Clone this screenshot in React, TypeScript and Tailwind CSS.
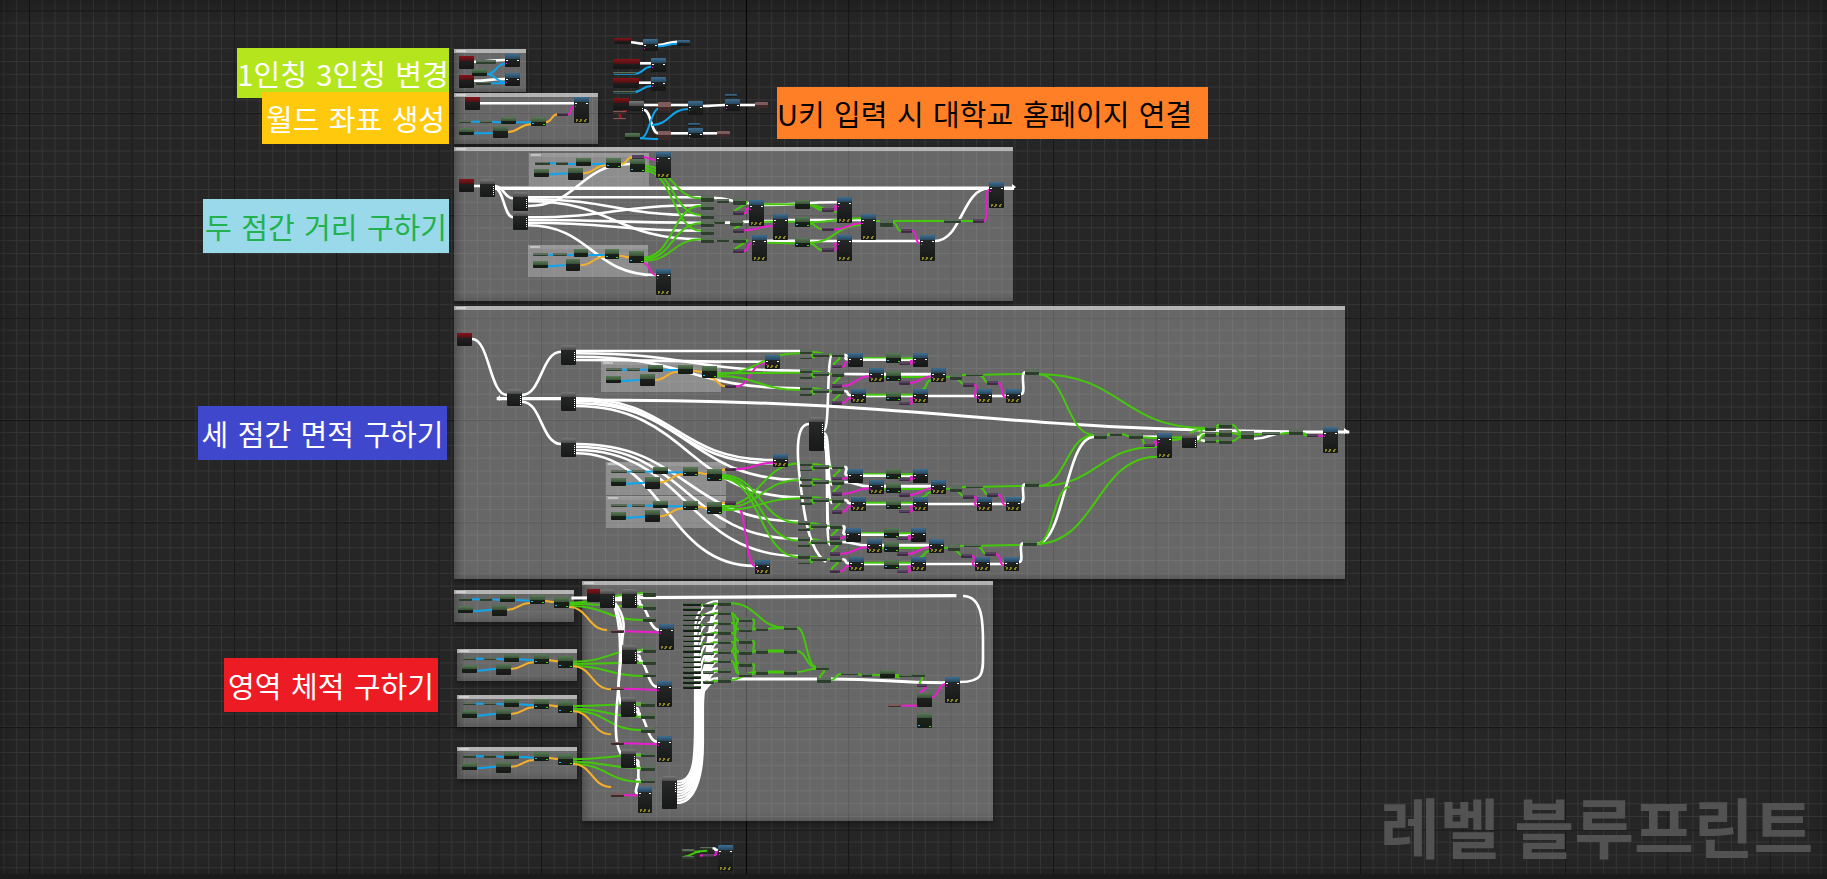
import React from 'react';

type Kind = 'red' | 'blue' | 'tall' | 'gray' | 'green' | 'small' | 'pink' | 'rose' | 'ink';
type NodeBox = [number, number, number, number, Kind];
type Wire = [number, number, number, number, string, number?];

const WHITE = '#ffffff';
const GREEN = '#45c80c';
const BLUE = '#10a4ec';
const ORANGE = '#f2b02c';
const MAGENTA = '#e91fce';
const RED = '#a81818';

interface Group {
  ox: number;
  oy: number;
  sx: number;
  sy: number;
  nodes: NodeBox[];
  wires: Wire[];
}

// comment boxes in the graph: x, y, right, bottom
const outerFrames = [
  [454, 49, 526, 92],
  [454, 93, 598, 144],
  [454, 147, 1013, 301],
  [454, 306, 1345, 579],
  [582, 581, 993, 821],
  [454, 590, 574, 622],
  [457, 649, 577, 681],
  [457, 695, 577, 727],
  [457, 747, 577, 779],
];
const innerFrames = [
  [529, 153, 649, 186],
  [528, 245, 648, 277],
  [601, 361, 721, 392],
  [606, 462, 726, 495],
  [606, 496, 726, 528],
];

const labels = [
  { text: '1인칭 3인칭 변경', x: 237, y: 48, w: 212, h: 50, bg: 'bg-[#b5e61d]', fg: 'text-white', align: 'justify-center' },
  { text: '월드 좌표 생성', x: 262, y: 92, w: 187, h: 52, bg: 'bg-[#ffc90e]', fg: 'text-white', align: 'justify-center' },
  { text: '두 점간 거리 구하기', x: 203, y: 199, w: 246, h: 54, bg: 'bg-[#99d9ea]', fg: 'text-[#22b14c]', align: 'justify-center' },
  { text: '세 점간 면적 구하기', x: 198, y: 406, w: 249, h: 54, bg: 'bg-[#3f48cc]', fg: 'text-white', align: 'justify-center' },
  { text: '영역 체적 구하기', x: 224, y: 658, w: 214, h: 54, bg: 'bg-[#ed1c24]', fg: 'text-white', align: 'justify-center' },
  { text: 'U키 입력 시 대학교 홈페이지 연결', x: 777, y: 87, w: 431, h: 52, bg: 'bg-[#ff7f27]', fg: 'text-black', align: 'justify-start' },
];

// the four "vector to float" snippets that feed the volume graph
const snippet = (x: number, y: number): NodeBox[] => [
  [x, y + 9, 36, 8, 'small'],
  [x + 58, y + 9, 36, 8, 'small'],
  [x + 115, y, 42, 22, 'green'],
  [x + 199, y, 42, 28, 'green'],
  [x - 2, y + 33, 42, 22, 'green'],
  [x + 93, y + 29, 42, 34, 'ink'],
  [x + 266, y + 5, 42, 35, 'green'],
];
const snippetWires = (x: number, y: number): Wire[] => [
  [x + 36, y + 13, x + 58, y + 13, BLUE],
  [x + 94, y + 13, x + 115, y + 15, BLUE],
  [x + 157, y + 15, x + 199, y + 17, BLUE],
  [x + 40, y + 49, x + 93, y + 44, BLUE],
  [x + 135, y + 44, x + 199, y + 24, ORANGE],
  [x + 241, y + 18, x + 266, y + 21, ORANGE],
  [x + 308, y + 36, x + 415, y + 105, ORANGE],
];

const topLeft: Group = {
  ox: 450,
  oy: 45,
  sx: 3,
  sy: 3,
  nodes: [
    [27, 33, 45, 38, 'red'],
    [27, 90, 45, 38, 'red'],
    [165, 28, 45, 38, 'blue'],
    [165, 85, 45, 38, 'blue'],
    [66, 72, 45, 21, 'green'],
    [78, 46, 60, 10, 'small'],
    [78, 110, 45, 10, 'small'],
    [45, 157, 45, 38, 'red'],
    [372, 157, 45, 76, 'tall'],
    [153, 216, 45, 21, 'green'],
    [243, 216, 45, 27, 'green'],
    [27, 249, 45, 21, 'green'],
    [128, 244, 45, 34, 'ink'],
    [27, 226, 36, 8, 'small'],
    [90, 226, 36, 8, 'small'],
    [322, 204, 32, 8, 'pink'],
  ],
  wires: [
    [72, 50, 165, 45, WHITE],
    [72, 107, 165, 102, WHITE],
    [111, 88, 165, 56, BLUE],
    [111, 88, 165, 112, BLUE],
    [123, 115, 165, 115, BLUE],
    [90, 175, 372, 175, WHITE],
    [63, 230, 90, 230, BLUE],
    [126, 230, 153, 232, BLUE],
    [198, 232, 243, 232, BLUE],
    [72, 265, 128, 264, BLUE],
    [173, 261, 243, 238, ORANGE],
    [288, 232, 322, 208, ORANGE],
    [354, 208, 372, 185, MAGENTA],
  ],
};

const topMiddle: Group = {
  ox: 600,
  oy: 25,
  sx: 3,
  sy: 3,
  nodes: [
    [42, 40, 50, 16, 'red'],
    [129, 42, 45, 36, 'blue'],
    [232, 46, 38, 16, 'blue'],
    [39, 102, 80, 30, 'red'],
    [153, 98, 45, 42, 'blue'],
    [39, 142, 70, 6, 'small'],
    [39, 160, 78, 30, 'red'],
    [153, 156, 45, 42, 'blue'],
    [39, 198, 70, 6, 'small'],
    [39, 220, 48, 34, 'red'],
    [87, 228, 45, 30, 'gray'],
    [39, 258, 40, 8, 'rose'],
    [39, 280, 38, 6, 'rose'],
    [174, 232, 38, 26, 'rose'],
    [264, 228, 45, 42, 'blue'],
    [375, 208, 35, 8, 'blue'],
    [375, 222, 45, 36, 'blue'],
    [465, 232, 40, 18, 'rose'],
    [174, 318, 38, 26, 'rose'],
    [264, 310, 45, 28, 'blue'],
    [264, 295, 35, 8, 'blue'],
    [352, 318, 38, 18, 'rose'],
    [75, 324, 45, 21, 'green'],
  ],
  wires: [
    [92, 52, 129, 56, WHITE],
    [174, 60, 232, 50, WHITE],
    [174, 64, 232, 56, BLUE],
    [119, 115, 153, 115, WHITE],
    [105, 146, 153, 125, BLUE],
    [42, 146, 105, 146, BLUE],
    [117, 173, 153, 173, WHITE],
    [100, 202, 153, 183, BLUE],
    [42, 202, 100, 202, BLUE],
    [132, 240, 174, 240, WHITE],
    [212, 240, 264, 240, WHITE],
    [309, 243, 375, 240, WHITE],
    [420, 240, 465, 240, WHITE],
    [132, 255, 174, 325, WHITE],
    [212, 325, 264, 325, WHITE],
    [309, 325, 352, 325, WHITE],
    [120, 340, 180, 250, BLUE],
    [120, 340, 180, 342, BLUE],
    [155, 300, 264, 252, BLUE],
    [50, 262, 80, 258, RED],
    [50, 262, 70, 282, RED],
  ],
};

const distance: Group = {
  ox: 440,
  oy: 140,
  sx: 1 / 0.3827,
  sy: 3,
  nodes: [
    [50, 117, 38, 38, 'red'],
    [105, 117, 38, 54, 'gray'],
    [191, 156, 38, 58, 'gray'],
    [191, 214, 38, 56, 'gray'],
    [247, 66, 40, 8, 'small'],
    [302, 66, 32, 8, 'small'],
    [355, 54, 40, 24, 'green'],
    [434, 54, 40, 30, 'green'],
    [246, 87, 38, 24, 'green'],
    [335, 84, 38, 36, 'ink'],
    [502, 46, 30, 14, 'pink'],
    [497, 58, 38, 38, 'green'],
    [564, 37, 39, 76, 'tall'],
    [243, 340, 40, 8, 'small'],
    [296, 340, 36, 8, 'small'],
    [350, 328, 38, 24, 'green'],
    [431, 328, 38, 30, 'green'],
    [243, 363, 38, 22, 'green'],
    [329, 358, 38, 34, 'ink'],
    [494, 334, 38, 36, 'green'],
    [564, 388, 39, 76, 'tall'],
    [682, 165, 33, 20, 'small'],
    [682, 190, 33, 20, 'small'],
    [682, 220, 33, 18, 'small'],
    [682, 243, 33, 18, 'small'],
    [682, 268, 33, 18, 'small'],
    [682, 292, 33, 16, 'small'],
    [724, 177, 30, 12, 'small'],
    [766, 174, 33, 20, 'small'],
    [766, 214, 28, 12, 'pink'],
    [716, 241, 30, 12, 'small'],
    [758, 238, 33, 20, 'small'],
    [766, 266, 28, 12, 'pink'],
    [724, 295, 30, 12, 'small'],
    [766, 292, 33, 16, 'small'],
    [766, 328, 28, 12, 'pink'],
    [808, 181, 39, 76, 'tall'],
    [870, 223, 39, 76, 'tall'],
    [815, 286, 39, 76, 'tall'],
    [928, 180, 38, 26, 'green'],
    [928, 232, 38, 28, 'green'],
    [928, 294, 38, 28, 'green'],
    [998, 205, 32, 11, 'pink'],
    [998, 263, 32, 11, 'pink'],
    [998, 325, 32, 11, 'pink'],
    [1037, 172, 39, 76, 'tall'],
    [1100, 223, 39, 76, 'tall'],
    [1037, 286, 39, 76, 'tall'],
    [1150, 238, 33, 22, 'small'],
    [1205, 268, 28, 10, 'pink'],
    [1254, 286, 39, 76, 'tall'],
    [1317, 238, 44, 12, 'small'],
    [1393, 238, 28, 12, 'pink'],
    [1435, 127, 39, 76, 'tall'],
  ],
  wires: [
    [88, 138, 105, 138, WHITE],
    [143, 145, 1500, 145, WHITE, 3.4],
    [143, 138, 191, 175, WHITE],
    [143, 145, 191, 232, WHITE],
    [229, 172, 682, 172, WHITE],
    [229, 178, 682, 226, WHITE],
    [229, 184, 682, 298, WHITE],
    [229, 198, 497, 72, WHITE],
    [229, 232, 682, 196, WHITE],
    [229, 240, 682, 248, WHITE],
    [229, 248, 682, 272, WHITE],
    [229, 256, 564, 405, WHITE],
    [715, 173, 808, 190, WHITE],
    [847, 195, 1037, 187, WHITE],
    [715, 248, 870, 243, WHITE],
    [909, 240, 1100, 240, WHITE],
    [854, 302, 1037, 303, WHITE],
    [1076, 303, 1254, 303, WHITE],
    [1293, 303, 1435, 145, WHITE],
    [535, 78, 682, 175, GREEN],
    [535, 85, 682, 225, GREEN],
    [535, 92, 682, 272, GREEN],
    [534, 352, 682, 197, GREEN],
    [534, 357, 682, 250, GREEN],
    [534, 362, 682, 298, GREEN],
    [847, 193, 928, 193, GREEN],
    [966, 195, 1037, 215, GREEN],
    [966, 196, 998, 210, GREEN],
    [847, 245, 928, 245, GREEN],
    [966, 247, 1100, 235, GREEN],
    [966, 250, 998, 268, GREEN],
    [854, 308, 928, 310, GREEN],
    [966, 308, 1100, 255, GREEN],
    [966, 310, 998, 330, GREEN],
    [1139, 243, 1150, 243, GREEN],
    [1183, 243, 1317, 243, GREEN],
    [1361, 243, 1393, 243, GREEN],
    [1183, 248, 1205, 272, GREEN],
    [799, 185, 770, 218, GREEN],
    [790, 248, 770, 270, GREEN],
    [799, 300, 770, 332, GREEN],
    [794, 220, 808, 205, MAGENTA],
    [794, 271, 870, 258, MAGENTA],
    [794, 333, 815, 310, MAGENTA],
    [1030, 210, 1037, 198, MAGENTA],
    [1030, 268, 1100, 250, MAGENTA],
    [1030, 330, 1037, 310, MAGENTA],
    [1233, 272, 1254, 310, MAGENTA],
    [1421, 243, 1435, 150, MAGENTA],
    [532, 52, 564, 60, MAGENTA],
    [532, 370, 564, 405, MAGENTA],
    [287, 70, 302, 70, BLUE],
    [334, 72, 355, 72, BLUE],
    [395, 72, 434, 72, BLUE],
    [284, 103, 335, 100, BLUE],
    [373, 100, 434, 76, ORANGE],
    [474, 72, 502, 52, ORANGE],
    [283, 344, 296, 344, BLUE],
    [332, 345, 350, 345, BLUE],
    [388, 345, 431, 345, BLUE],
    [281, 379, 329, 376, BLUE],
    [367, 376, 431, 350, ORANGE],
    [469, 347, 494, 352, ORANGE],
  ],
};

const area: Group = {
  ox: 450,
  oy: 300,
  sx: 3,
  sy: 3,
  nodes: [
    [21, 99, 45, 38, 'red'],
    [171, 267, 45, 50, 'gray'],
    [333, 136, 45, 58, 'gray'],
    [333, 276, 45, 57, 'gray'],
    [333, 415, 45, 56, 'gray'],
    [468, 205, 48, 8, 'small'],
    [531, 205, 38, 8, 'small'],
    [594, 195, 45, 22, 'green'],
    [684, 195, 45, 26, 'green'],
    [468, 228, 45, 22, 'green'],
    [570, 223, 45, 34, 'ink'],
    [756, 199, 45, 34, 'green'],
    [826, 254, 32, 10, 'pink'],
    [945, 166, 45, 40, 'tall'],
    [484, 511, 48, 8, 'small'],
    [546, 511, 38, 8, 'small'],
    [609, 501, 45, 22, 'green'],
    [699, 501, 45, 28, 'green'],
    [483, 535, 45, 22, 'green'],
    [585, 531, 45, 36, 'ink'],
    [771, 507, 45, 36, 'green'],
    [826, 503, 32, 10, 'pink'],
    [969, 462, 45, 40, 'tall'],
    [484, 613, 48, 8, 'small'],
    [546, 613, 38, 8, 'small'],
    [609, 603, 45, 22, 'green'],
    [699, 603, 45, 28, 'green'],
    [483, 637, 45, 22, 'green'],
    [585, 631, 45, 36, 'ink'],
    [771, 607, 45, 34, 'green'],
    [826, 604, 32, 10, 'pink'],
    [915, 781, 45, 40, 'tall'],
    [1077, 352, 45, 100, 'gray'],
  ],
  wires: [
    [66, 117, 171, 285, WHITE],
    [216, 285, 333, 155, WHITE],
    [140, 296, 333, 296, WHITE, 3.2],
    [216, 305, 333, 432, WHITE],
    [378, 153, 1051, 153, WHITE],
    [378, 160, 1051, 212, WHITE],
    [378, 170, 1051, 265, WHITE],
    [378, 180, 945, 185, WHITE],
    [378, 295, 969, 480, WHITE],
    [378, 302, 969, 490, WHITE],
    [378, 310, 1051, 540, WHITE],
    [378, 318, 1051, 592, WHITE],
    [378, 300, 2698, 396, WHITE, 3],
    [378, 432, 1045, 664, WHITE],
    [378, 440, 1045, 716, WHITE],
    [378, 450, 1045, 768, WHITE],
    [378, 460, 915, 798, WHITE],
    [1122, 390, 1147, 165, WHITE],
    [1122, 400, 1147, 505, WHITE],
    [1122, 410, 1147, 555, WHITE],
    [1122, 420, 1147, 610, WHITE],
    [1122, 430, 1141, 685, WHITE],
    [1122, 440, 1141, 735, WHITE],
    [516, 209, 531, 209, BLUE],
    [569, 209, 594, 209, BLUE],
    [639, 210, 684, 210, BLUE],
    [513, 243, 570, 240, BLUE],
    [615, 240, 684, 215, ORANGE],
    [729, 212, 756, 215, ORANGE],
    [780, 233, 826, 259, ORANGE],
    [858, 259, 945, 190, MAGENTA],
    [801, 222, 1051, 160, GREEN],
    [801, 220, 1051, 218, GREEN],
    [801, 228, 1051, 270, GREEN],
    [532, 515, 546, 515, BLUE],
    [584, 515, 609, 515, BLUE],
    [654, 517, 699, 517, BLUE],
    [528, 551, 585, 548, BLUE],
    [630, 547, 699, 523, ORANGE],
    [744, 518, 771, 522, ORANGE],
    [816, 510, 826, 508, ORANGE],
    [858, 508, 969, 488, MAGENTA],
    [816, 525, 1045, 668, GREEN],
    [816, 530, 1045, 722, GREEN],
    [816, 535, 1045, 772, GREEN],
    [532, 617, 546, 617, BLUE],
    [584, 617, 609, 617, BLUE],
    [654, 619, 699, 619, BLUE],
    [528, 653, 585, 650, BLUE],
    [630, 649, 699, 625, ORANGE],
    [744, 620, 771, 624, ORANGE],
    [816, 609, 826, 609, ORANGE],
    [858, 609, 915, 798, MAGENTA],
    [816, 618, 1051, 490, GREEN],
    [816, 624, 1051, 540, GREEN],
    [816, 630, 1051, 595, GREEN],
  ],
};

// one triple of length calculations, repeated three times in the area graph
function areaSet(dx: number, s: number[], b: number[]): { nodes: NodeBox[]; wires: Wire[] } {
  const nodes: NodeBox[] = [];
  const wires: Wire[] = [];
  s.forEach((y) => {
    nodes.push(
      [1051 + dx, y, 36, 14, 'small'],
      [1051 + dx, y + 22, 36, 8, 'small'],
      [1090 + dx, y + 10, 46, 12, 'small'],
      [1147 + dx, y + 10, 36, 14, 'small'],
      [1147 + dx, y + 47, 30, 10, 'pink'],
    );
    wires.push(
      [1087 + dx, y + 8, 1147 + dx, y + 16, GREEN],
      [1087 + dx, y + 24, 1090 + dx, y + 16, GREEN],
      [1165 + dx, y + 24, 1155 + dx, y + 47, GREEN],
    );
  });
  nodes.push(
    [1193 + dx, b[0], 45, 42, 'blue'],
    [1257 + dx, b[1], 45, 40, 'tall'],
    [1203 + dx, b[2], 45, 40, 'tall'],
    [1308 + dx, b[0], 45, 28, 'green'],
    [1308 + dx, b[1] + 9, 45, 28, 'green'],
    [1308 + dx, b[2] + 8, 45, 28, 'green'],
    [1348 + dx, b[0] + 26, 32, 10, 'pink'],
    [1348 + dx, b[1] + 39, 32, 10, 'pink'],
    [1348 + dx, b[2] + 38, 32, 10, 'pink'],
    [1388 + dx, b[0], 45, 42, 'blue'],
    [1443 + dx, b[1], 45, 40, 'tall'],
    [1388 + dx, b[2], 45, 40, 'tall'],
    [1500 + dx, b[1] + 15, 36, 20, 'small'],
    [1548 + dx, b[1] + 15, 52, 8, 'small'],
    [1540 + dx, b[1] + 45, 32, 10, 'pink'],
    [1612 + dx, b[1] + 39, 32, 10, 'pink'],
    [1581 + dx, b[2], 45, 40, 'tall'],
    [1668 + dx, b[2], 45, 40, 'tall'],
    [1726 + dx, b[1] + 3, 40, 18, 'small'],
  );
  wires.push(
    [1183 + dx, s[0] + 16, 1193 + dx, b[0] + 18, WHITE],
    [1183 + dx, s[1] + 16, 1257 + dx, b[1] + 18, WHITE],
    [1183 + dx, s[2] + 16, 1203 + dx, b[2] + 18, WHITE],
    [1238 + dx, b[0] + 14, 1308 + dx, b[0] + 14, GREEN],
    [1238 + dx, b[0] + 19, 1388 + dx, b[0] + 19, WHITE],
    [1302 + dx, b[1] + 18, 1443 + dx, b[1] + 18, WHITE, 3],
    [1302 + dx, b[1] + 26, 1443 + dx, b[1] + 26, GREEN],
    [1248 + dx, b[2] + 20, 1388 + dx, b[2] + 20, WHITE],
    [1248 + dx, b[2] + 16, 1308 + dx, b[2] + 16, GREEN],
    [1353 + dx, b[0] + 15, 1388 + dx, b[0] + 14, GREEN],
    [1353 + dx, b[2] + 16, 1388 + dx, b[2] + 16, GREEN],
    [1415 + dx, b[2], 1443 + dx, b[1] + 36, GREEN],
    [1488 + dx, b[1] + 25, 1500 + dx, b[1] + 25, GREEN],
    [1600 + dx, b[1] + 19, 1726 + dx, b[1] + 17, GREEN],
    [1536 + dx, b[1] + 20, 1548 + dx, b[1] + 19, GREEN],
    [1512 + dx, b[1] + 28, 1545 + dx, b[1] + 48, GREEN],
    [1590 + dx, b[1] + 22, 1615 + dx, b[1] + 42, GREEN],
    [1433 + dx, b[2] + 20, 1581 + dx, b[2] + 20, WHITE],
    [1626 + dx, b[2] + 20, 1668 + dx, b[2] + 20, WHITE],
    [1713 + dx, b[2] + 14, 1726 + dx, b[1] + 12, WHITE],
    [1177 + dx, s[0] + 52, 1193 + dx, b[0] + 26, MAGENTA],
    [1177 + dx, s[1] + 52, 1257 + dx, b[1] + 24, MAGENTA],
    [1177 + dx, s[2] + 52, 1203 + dx, b[2] + 26, MAGENTA],
    [1380 + dx, b[0] + 31, 1388 + dx, b[0] + 22, MAGENTA],
    [1380 + dx, b[1] + 44, 1443 + dx, b[1] + 24, MAGENTA],
    [1380 + dx, b[2] + 43, 1388 + dx, b[2] + 26, MAGENTA],
    [1572 + dx, b[1] + 50, 1581 + dx, b[2] + 24, MAGENTA],
    [1644 + dx, b[1] + 44, 1668 + dx, b[2] + 24, MAGENTA],
  );
  return { nodes, wires };
}

const setTop = areaSet(0, [148, 206, 257], [160, 205, 268]);
const setMid = areaSet(0, [484, 530, 584], [508, 541, 592]);
const setLow = areaSet(-6, [662, 710, 762], [685, 718, 772]);

const areaTail: Group = {
  ox: 900,
  oy: 300,
  sx: 3,
  sy: 3,
  nodes: [
    [582, 398, 38, 18, 'small'],
    [630, 398, 36, 10, 'small'],
    [688, 400, 40, 18, 'small'],
    [732, 432, 32, 10, 'pink'],
    [771, 398, 45, 76, 'tall'],
    [846, 398, 45, 46, 'gray'],
    [915, 378, 32, 14, 'small'],
    [915, 396, 32, 14, 'small'],
    [915, 416, 32, 14, 'small'],
    [958, 366, 38, 18, 'small'],
    [958, 390, 38, 20, 'small'],
    [958, 414, 38, 18, 'small'],
    [1024, 392, 38, 26, 'small'],
    [1085, 396, 56, 10, 'small'],
    [1167, 386, 42, 18, 'small'],
    [1221, 402, 32, 10, 'pink'],
    [1269, 382, 45, 76, 'tall'],
  ],
  wires: [
    [416, 223, 582, 405, GREEN],
    [416, 223, 915, 384, GREEN],
    [416, 558, 582, 405, GREEN],
    [416, 558, 771, 440, GREEN],
    [408, 732, 582, 408, GREEN],
    [408, 732, 582, 411, WHITE],
    [408, 732, 771, 470, GREEN],
    [410, 732, 510, 560, GREEN],
    [620, 405, 630, 403, GREEN],
    [666, 403, 688, 408, GREEN],
    [728, 410, 771, 410, WHITE],
    [728, 412, 771, 414, GREEN],
    [720, 414, 740, 436, GREEN],
    [764, 436, 771, 424, MAGENTA],
    [816, 412, 846, 412, GREEN],
    [891, 408, 915, 384, GREEN],
    [891, 412, 915, 402, WHITE],
    [891, 418, 915, 422, WHITE],
    [891, 424, 915, 404, GREEN],
    [816, 420, 915, 386, GREEN],
    [947, 384, 958, 375, GREEN],
    [947, 402, 958, 400, GREEN],
    [947, 422, 958, 423, GREEN],
    [996, 375, 1024, 398, GREEN],
    [996, 400, 1024, 404, GREEN],
    [996, 423, 1024, 410, GREEN],
    [1062, 404, 1085, 402, GREEN],
    [1062, 416, 1167, 396, WHITE],
    [1141, 401, 1167, 398, GREEN],
    [1209, 400, 1221, 406, GREEN],
    [1253, 407, 1269, 407, MAGENTA],
  ],
};

const volume: Group = {
  ox: 450,
  oy: 580,
  sx: 2.8,
  sy: 3,
  nodes: [
    [384, 28, 36, 38, 'red'],
    [420, 28, 42, 55, 'gray'],
    [482, 28, 42, 55, 'gray'],
    [540, 30, 38, 20, 'small'],
    [540, 70, 38, 20, 'small'],
    [540, 110, 38, 16, 'small'],
    [586, 132, 41, 77, 'tall'],
    [482, 196, 42, 55, 'gray'],
    [540, 200, 38, 18, 'small'],
    [540, 238, 38, 18, 'small'],
    [540, 278, 38, 14, 'small'],
    [580, 304, 41, 77, 'tall'],
    [478, 352, 42, 58, 'gray'],
    [535, 364, 38, 16, 'small'],
    [535, 400, 38, 18, 'small'],
    [535, 440, 38, 18, 'small'],
    [580, 468, 41, 77, 'tall'],
    [478, 508, 42, 56, 'gray'],
    [535, 516, 38, 16, 'small'],
    [535, 556, 38, 16, 'small'],
    [535, 594, 38, 16, 'small'],
    [526, 622, 41, 77, 'tall'],
    [594, 588, 41, 98, 'gray'],
    [451, 149, 36, 10, 'rose'],
    [451, 321, 36, 10, 'rose'],
    [451, 485, 36, 10, 'rose'],
    [451, 640, 36, 10, 'rose'],
    [1204, 270, 42, 24, 'green'],
    [1258, 282, 36, 10, 'small'],
    [1294, 278, 36, 14, 'small'],
    [1308, 312, 28, 10, 'pink'],
    [1308, 340, 42, 40, 'ink'],
    [1386, 292, 41, 76, 'tall'],
    [1308, 400, 42, 44, 'green'],
    [1226, 373, 36, 8, 'rose'],
    [750, 796, 42, 76, 'tall'],
    [650, 808, 34, 8, 'small'],
    [650, 828, 34, 8, 'small'],
    [700, 800, 34, 8, 'small'],
    [708, 822, 30, 10, 'pink'],
  ],
  wires: [
    [340, 54, 1418, 47, WHITE, 3.2],
    [462, 60, 482, 60, WHITE],
    [524, 44, 540, 42, WHITE],
    [524, 60, 540, 80, WHITE],
    [524, 70, 586, 150, WHITE],
    [524, 216, 540, 210, WHITE],
    [524, 226, 540, 248, WHITE],
    [524, 236, 580, 320, WHITE],
    [520, 372, 535, 372, WHITE],
    [520, 384, 535, 410, WHITE],
    [520, 395, 580, 485, WHITE],
    [520, 525, 535, 525, WHITE],
    [520, 540, 535, 565, WHITE],
    [520, 550, 535, 605, WHITE],
    [520, 600, 526, 640, WHITE],
    [790, 297, 1028, 297, WHITE, 3],
    [1066, 297, 1386, 308, WHITE, 3],
    [336, 68, 540, 40, GREEN],
    [336, 72, 540, 80, GREEN],
    [336, 78, 540, 120, GREEN],
    [344, 245, 540, 210, GREEN],
    [344, 252, 540, 248, GREEN],
    [344, 258, 540, 288, GREEN],
    [344, 378, 535, 372, GREEN],
    [344, 386, 535, 410, GREEN],
    [344, 392, 535, 450, GREEN],
    [344, 538, 535, 525, GREEN],
    [344, 545, 535, 565, GREEN],
    [344, 552, 535, 605, GREEN],
    [487, 154, 586, 157, MAGENTA],
    [487, 326, 580, 330, MAGENTA],
    [487, 490, 580, 492, MAGENTA],
    [487, 645, 526, 646, MAGENTA],
    [1246, 285, 1294, 286, GREEN],
    [1318, 292, 1320, 312, GREEN],
    [1328, 322, 1322, 340, MAGENTA],
    [1350, 352, 1386, 312, MAGENTA],
    [1226, 377, 1308, 377, MAGENTA],
    [684, 815, 720, 812, GREEN],
    [655, 830, 700, 815, GREEN],
    [735, 805, 750, 810, WHITE],
    [738, 826, 750, 815, MAGENTA],
    [700, 827, 708, 826, MAGENTA],
  ],
};

// dense wiring of the volume graph, in reference pixels at 3x around (680,590)
const volumeDense: Group = {
  ox: 680,
  oy: 590,
  sx: 3,
  sy: 3,
  nodes: [
    ...[40, 55, 71, 87, 102, 118, 134, 150, 165, 181, 197, 212, 228, 244, 259, 274, 289].map(
      (y): NodeBox => [10, y, 52, 7, 'green'],
    ),
    ...[42, 71, 100, 129, 158, 187, 215, 244, 273].map((y): NodeBox => [70, y, 32, 8, 'small']),
    ...[33, 62, 92, 120, 149, 178, 206, 235, 264].map((y): NodeBox => [115, y, 38, 14, 'small']),
    ...[82, 113, 147, 180, 216, 248].map((y): NodeBox => [178, y, 38, 14, 'small']),
    [227, 110, 36, 14, 'small'],
    [227, 177, 36, 14, 'small'],
    [227, 240, 36, 14, 'small'],
    [312, 107, 38, 14, 'small'],
    [312, 177, 38, 14, 'small'],
    [312, 240, 38, 14, 'small'],
    [408, 225, 38, 16, 'small'],
    [412, 264, 40, 14, 'small'],
    [483, 248, 52, 8, 'small'],
    [545, 250, 32, 10, 'small'],
  ],
  wires: [
    ...[33, 62, 92, 120, 149, 178, 206, 235, 264].flatMap((y, i): Wire[] => [
      [46, 330 - i * 2, 115, y + 7, WHITE],
      [62, y + 12, 115, y + 8, GREEN],
    ]),
    [153, 40, 312, 112, GREEN],
    [153, 70, 178, 88, GREEN],
    [153, 98, 178, 118, GREEN],
    [153, 128, 178, 152, GREEN],
    [153, 155, 178, 186, GREEN],
    [153, 184, 178, 220, GREEN],
    [153, 213, 178, 252, GREEN],
    [153, 70, 178, 250, GREEN],
    [153, 184, 178, 90, GREEN],
    [153, 270, 227, 246, GREEN],
    [216, 88, 227, 116, GREEN],
    [216, 118, 227, 116, GREEN],
    [216, 152, 227, 182, GREEN],
    [216, 186, 227, 182, GREEN],
    [216, 222, 227, 246, GREEN],
    [216, 252, 227, 246, GREEN],
    [263, 116, 312, 114, GREEN],
    [263, 183, 312, 183, GREEN, 3],
    [263, 246, 312, 246, GREEN, 3],
    [350, 112, 408, 230, GREEN],
    [350, 183, 408, 232, GREEN],
    [350, 246, 408, 236, GREEN],
    [428, 240, 424, 264, GREEN],
    [452, 270, 483, 252, GREEN],
    [535, 253, 545, 254, GREEN],
    [577, 254, 660, 262, GREEN],
  ],
};

const bundleYs = [605, 613, 621, 629, 637, 645, 653, 661, 669];
const rowYs = [97, 126, 156, 184, 213, 242, 270, 299, 328];

// exec fan from the tall sequence node up into the rows (real pixels)
const bundlePaths = bundleYs.map((y, i) => {
  const sy = 580 + y / 3;
  const sx = 677;
  const bend = 695 + i * 1;
  const ty = 590 + (rowYs[i] - 64) / 3;
  return `M${sx},${sy} C${sx + 18},${sy} ${bend},${sy - 26} ${bend},${sy - 60} L${bend},${ty + 30} C${bend},${ty + 10} ${705},${ty} ${718},${ty}`;
});

// loops that leave a node and bend back, in real pixels
const loopPaths = [
  'M963,596 C985,596 983,630 983,650 C983,672 985,682 960,682',
  'M615,603 C632,625 618,640 622,652',
  'M615,606 C632,640 612,680 621,704',
  'M615,608 C630,660 606,730 621,754',
  'M809,424 C792,424 798,470 804,510 C808,535 815,555 826,562',
];

const groups = [topLeft, topMiddle, distance, area, areaTail, volume, volumeDense];

const nodeStyles: Record<Kind, { head: string; body: string }> = {
  red: { head: 'bg-linear-to-b from-[#8a1218] to-[#4a1014]', body: 'bg-linear-to-b from-[#262626] to-[#161616]' },
  blue: { head: 'bg-linear-to-b from-[#3f6f92] to-[#28465c]', body: 'bg-linear-to-b from-[#262929] to-[#151717]' },
  tall: { head: 'bg-linear-to-b from-[#3f6f92] to-[#28465c]', body: 'bg-linear-to-b from-[#272b2a] to-[#161817]' },
  gray: { head: 'bg-linear-to-b from-[#7a7a7a] to-[#484848]', body: 'bg-linear-to-b from-[#2a2c2c] to-[#171919]' },
  green: { head: 'bg-linear-to-b from-[#5a7c58] to-[#3a5238]', body: 'bg-linear-to-b from-[#1d2a1d] to-[#141a14]' },
  ink: { head: 'bg-linear-to-b from-[#587858] to-[#384e38]', body: 'bg-linear-to-b from-[#252725] to-[#161816]' },
  small: { head: 'bg-[#5e6c5e]', body: 'bg-[#2e3e2c]' },
  pink: { head: 'bg-[#56445e]', body: 'bg-[#3e2c42]' },
  rose: { head: 'bg-[#7e5c5c]', body: 'bg-[#3c2a2a]' },
};

function px(g: Group, n: NodeBox) {
  return {
    left: g.ox + n[0] / g.sx,
    top: g.oy + n[1] / g.sy,
    width: n[2] / g.sx,
    height: n[3] / g.sy,
  };
}

function wirePath(g: Group, w: Wire) {
  const x1 = g.ox + w[0] / g.sx;
  const y1 = g.oy + w[1] / g.sy;
  const x2 = g.ox + w[2] / g.sx;
  const y2 = g.oy + w[3] / g.sy;
  const d = Math.max(Math.abs(x2 - x1) * 0.5, 6);
  return `M${x1.toFixed(1)},${y1.toFixed(1)} C${(x1 + d).toFixed(1)},${y1.toFixed(1)} ${(x2 - d).toFixed(1)},${y2.toFixed(1)} ${x2.toFixed(1)},${y2.toFixed(1)}`;
}

const GraphNode: React.FC<{ g: Group; n: NodeBox }> = ({ g, n }) => {
  const kind = n[4];
  const st = nodeStyles[kind];
  const box = px(g, n);
  const compact = box.height < 9;
  return (
    <div className={`absolute flex flex-col overflow-hidden rounded-[1px] ${st.body}`} style={box}>
      <div className={`shrink-0 ${compact ? 'h-1/2' : 'h-[5px]'} ${st.head}`} />
      {kind === 'gray' && !compact && (
        <div className="absolute right-[1px] top-[7px] flex flex-col gap-[1px]">
          <span className="h-[1px] w-[1px] bg-white" />
          <span className="h-[1px] w-[1px] bg-white" />
          <span className="h-[1px] w-[1px] bg-white" />
          <span className="h-[1px] w-[1px] bg-white" />
          <span className="h-[1px] w-[1px] bg-white" />
        </div>
      )}
      {(kind === 'blue' || kind === 'tall') && !compact && (
        <>
          <span className="absolute left-[1px] top-[6px] h-[1px] w-[2px] bg-white" />
          <span className="absolute right-[1px] top-[6px] h-[1px] w-[2px] bg-white" />
          <span className="absolute left-[1px] top-[9px] h-[1px] w-[1px] bg-[#e91fce]" />
        </>
      )}
      {kind === 'tall' && (
        <div className="absolute bottom-[1px] left-[2px] right-[2px] h-[3px] bg-[repeating-linear-gradient(115deg,#8a8420_0,#8a8420_2px,#1c1c1c_2px,#1c1c1c_4px)]" />
      )}
      {(kind === 'green' || kind === 'small') && !compact && (
        <span className="absolute bottom-[1px] right-[1px] h-[1px] w-[2px] bg-[#45e012]" />
      )}
      {kind === 'green' && !compact && <span className="absolute bottom-[2px] left-[1px] h-[1px] w-[2px] bg-[#2cc0ff]" />}
    </div>
  );
};

const Frame: React.FC<{ box: number[]; inner?: boolean }> = ({ box, inner }) => (
  <div
    className={`absolute ${
      inner ? 'bg-white/25' : 'bg-white/30 shadow-[0_3px_6px_rgba(0,0,0,0.35),inset_8px_-5px_8px_-5px_rgba(0,0,0,0.28)]'
    }`}
    style={{ left: box[0], top: box[1], width: box[2] - box[0], height: box[3] - box[1] }}
  >
    <div className={`flex h-[4px] items-center pl-[2px] ${inner ? 'bg-white/10' : 'bg-white/50'}`}>
      <span className="h-[2px] w-[10px] bg-white/40" />
    </div>
  </div>
);

export default function App() {
  const wireGroups = [
    ...groups,
    { ...area, ...setTop },
    { ...area, ...setMid },
    { ...area, ...setLow },
    { ...volume, nodes: [], wires: snippetWires(36, 223) },
    { ...volume, nodes: [], wires: snippetWires(36, 358) },
    { ...volume, nodes: [], wires: snippetWires(36, 516) },
    { ...volume, nodes: [], wires: snippetWires(25, 45) },
  ];
  const nodeGroups: Group[] = [
    ...wireGroups.slice(0, 10),
    { ...volume, nodes: snippet(36, 223), wires: [] },
    { ...volume, nodes: snippet(36, 358), wires: [] },
    { ...volume, nodes: snippet(36, 516), wires: [] },
    { ...volume, nodes: snippet(25, 45), wires: [] },
  ];

  return (
    <div className="relative h-[879px] w-[1827px] overflow-hidden bg-[#262626] font-['Noto_Sans_CJK_KR',sans-serif]">
      {/* grid: fine lines, then the heavy ones every 8 cells */}
      <div className="absolute inset-0 bg-[linear-gradient(to_right,#363636_1px,transparent_1px),linear-gradient(to_bottom,#363636_1px,transparent_1px)] bg-[size:12.8px_12.8px] bg-[position:3.4px_9.8px]" />
      <div className="absolute inset-0 bg-[linear-gradient(to_right,#141414_1px,transparent_1px),linear-gradient(to_bottom,#141414_1px,transparent_1px)] bg-[size:102.4px_102.4px] bg-[position:29px_10.4px]" />
      <div className="absolute bottom-0 top-0 left-[746px] w-[1px] bg-[#050505]" />
      <div className="absolute inset-0 shadow-[inset_0_0_24px_rgba(0,0,0,0.35)]" />

      {outerFrames.map((b) => (
        <Frame key={b.join()} box={b} />
      ))}
      {innerFrames.map((b) => (
        <Frame key={b.join()} box={b} inner />
      ))}

      <svg className="absolute left-0 top-0" width={1827} height={879} fill="none">
        {wireGroups.flatMap((g, i) =>
          g.wires.map((w, j) => (
            <path key={`${i}-${j}`} d={wirePath(g, w)} stroke={w[4]} strokeWidth={w[5] ?? (w[4] === WHITE ? 2.6 : 2)} />
          )),
        )}
        {bundlePaths.map((d) => (
          <path key={d} d={d} stroke={WHITE} strokeWidth={2.2} />
        ))}
        {loopPaths.map((d) => (
          <path key={d} d={d} stroke={WHITE} strokeWidth={2.6} />
        ))}
        {/* exec arrow heads where a wire runs off its last node */}
        <path d="M1012,184 l4,3 l-4,3 Z M1344,428 l4,3 l-4,3 Z M500,395 l-3,3 l3,3 Z" fill={WHITE} />
      </svg>

      {nodeGroups.flatMap((g, i) => g.nodes.map((n, j) => <GraphNode key={`${i}-${j}`} g={g} n={n} />))}

      {labels.map((l) => (
        <div
          key={l.text}
          className={`absolute flex items-center whitespace-nowrap text-[29px] leading-none [word-spacing:3px] ${l.align} ${l.bg} ${l.fg}`}
          style={{ left: l.x, top: l.y, width: l.w, height: l.h }}
        >
          {l.text}
        </div>
      ))}

      <div className="absolute left-[1380px] top-[785px] whitespace-nowrap text-[65px] font-bold leading-[80px] text-[#525252]">
        레벨 블루프린트
      </div>
      <div className="absolute bottom-0 left-0 right-0 h-[5px] bg-[#1b1b1b]" />
    </div>
  );
}
